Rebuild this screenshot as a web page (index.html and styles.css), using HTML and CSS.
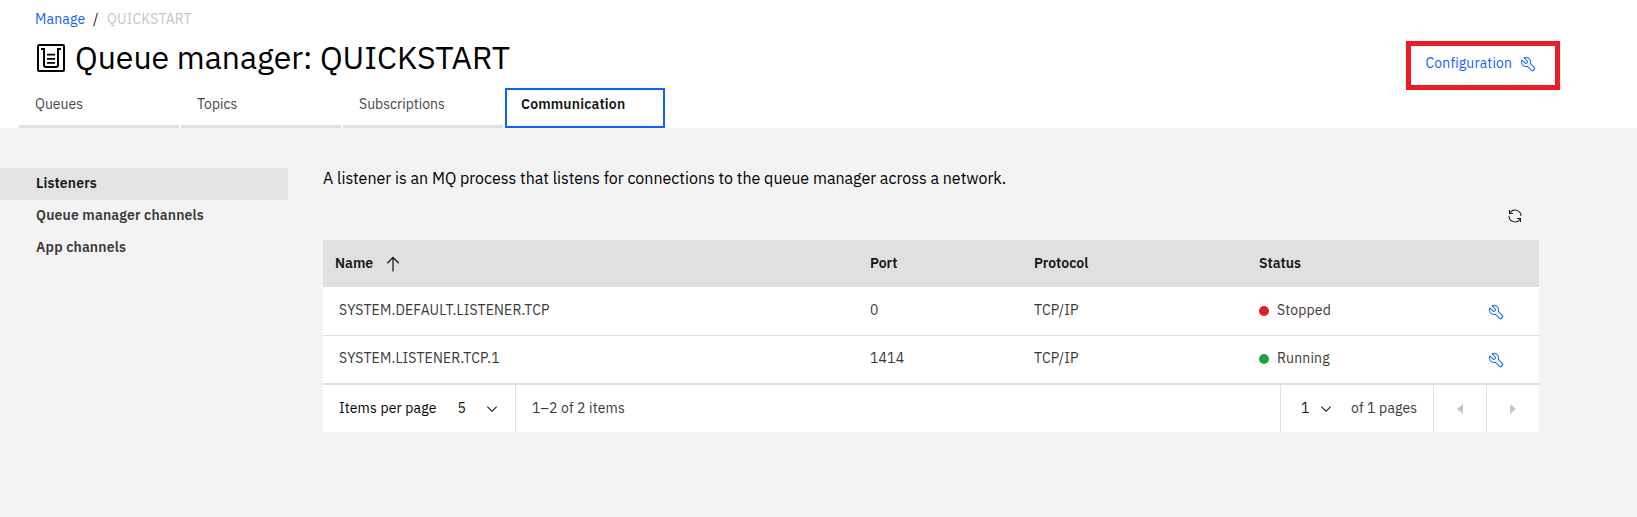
FILE: index.html
```html
<!DOCTYPE html>
<html lang="en">
<head>
<meta charset="utf-8">
<title>Queue manager: QUICKSTART</title>
<link rel="stylesheet" href="styles.css">
</head>
<body>
<svg class="defs" aria-hidden="true">
  <symbol id="wrench" viewBox="0 0 32 32"><path d="M12.1 2a9.8 9.8 0 0 0-5.4 1.6l6.4 6.4a2.1 2.1 0 0 1 .2 3 2.1 2.1 0 0 1-3-.2L3.7 6.4A9.84 9.84 0 0 0 2 12.1a10.14 10.14 0 0 0 10.1 10.1 10.9 10.9 0 0 0 2.6-.3l6.7 6.7a5 5 0 0 0 7.1-7.1l-6.7-6.7a10.9 10.9 0 0 0 .3-2.6A10 10 0 0 0 12.1 2zm8 10.1a7.61 7.61 0 0 1-.3 2.1l-.3 1.1.8.8 6.7 6.7a2.88 2.88 0 0 1 .9 2.1A2.72 2.72 0 0 1 27 27a2.9 2.9 0 0 1-4.2 0l-6.7-6.7-.8-.8-1.1.3a7.61 7.61 0 0 1-2.1.3 8.27 8.27 0 0 1-5.7-2.3A7.63 7.63 0 0 1 4 12.1a8.33 8.33 0 0 1 .3-2.2l4.4 4.4a4.14 4.14 0 0 0 5.9.2 4.14 4.14 0 0 0-.2-5.9L10 4.2a6.45 6.45 0 0 1 2-.3 8.27 8.27 0 0 1 5.7 2.3 8.49 8.49 0 0 1 2.4 5.9z"/></symbol>
  <symbol id="chevron" viewBox="0 0 16 16"><path d="M8 11 3 6l.7-.7L8 9.6l4.3-4.3.7.7z"/></symbol>
</svg>
<header class="header">
  <nav class="breadcrumb"><a class="crumb-link">Manage</a><span class="crumb-sep">/</span><span class="crumb-current">QUICKSTART</span></nav>
  <div class="title-row">
    <svg class="title-icon" viewBox="0 0 28 28"><rect x="1" y="1" width="26" height="26" rx="1.2"/><path d="M4 5h3v16q0 2 2 2h10q2 0 2-2V5h3"/><path class="thin" d="M10 10.7h8M10 14.8h8M10 18.9h8"/></svg>
    <h1 class="title">Queue manager: QUICKSTART</h1>
    <a class="config"><span class="config-label">Configuration</span><svg class="icon16"><use href="#wrench"/></svg></a>
  </div>
  <nav class="tabs">
    <a class="tab">Queues</a><a class="tab">Topics</a><a class="tab">Subscriptions</a><a class="tab tab-active">Communication</a>
  </nav>
</header>
<main class="main">
  <nav class="side">
    <a class="side-item side-active">Listeners</a>
    <a class="side-item">Queue manager channels</a>
    <a class="side-item">App channels</a>
  </nav>
  <section class="content">
    <p class="desc">A listener is an MQ process that listens for connections to the queue manager across a network.</p>
    <div class="toolbar"><svg class="icon16" viewBox="0 0 32 32"><path d="M12 10H6.78A11 11 0 0 1 27 16h2A13 13 0 0 0 6 7.68V4H4v8h8zM20 22h5.22A11 11 0 0 1 5 16H3a13 13 0 0 0 23 8.32V28h2v-8h-8z"/></svg></div>
    <div class="row head">
      <div class="h-name"><span>Name</span><svg class="icon20" viewBox="0 0 32 32"><path d="M16 4 6 14l1.41 1.41L15 7.83V28h2V7.83l7.59 7.58L26 14z"/></svg></div>
      <div>Port</div><div>Protocol</div><div>Status</div>
    </div>
    <div class="row">
      <div class="name">SYSTEM.DEFAULT.LISTENER.TCP</div><div>0</div><div>TCP/IP</div>
      <div class="status"><i class="dot red"></i><span>Stopped</span></div><svg class="icon16 blue"><use href="#wrench"/></svg>
    </div>
    <div class="row row-last">
      <div class="name">SYSTEM.LISTENER.TCP.1</div><div>1414</div><div>TCP/IP</div>
      <div class="status"><i class="dot green"></i><span>Running</span></div><svg class="icon16 blue"><use href="#wrench"/></svg>
    </div>
    <div class="pagination">
      <div class="per-page"><span class="ipp">Items per page</span><span class="size">5</span><svg class="icon16"><use href="#chevron"/></svg></div>
      <div class="range">1–2 of 2 items</div>
      <div class="page"><span class="page-num">1</span><svg class="icon16"><use href="#chevron"/></svg><span class="of">of 1 pages</span></div>
      <div class="pager"><svg class="caret" viewBox="0 0 6 10"><path d="M6 0v10L0 5z"/></svg></div>
      <div class="pager pager-next"><svg class="caret" viewBox="0 0 6 10"><path d="M0 0v10l6-5z"/></svg></div>
    </div>
  </section>
</main>
</body>
</html>
```
FILE: styles.css
```css
* { box-sizing: border-box; }
body { margin: 0; background: #f3f3f3; color: #161616; font: 14px/18px "IBM Plex Sans", Roboto, sans-serif; letter-spacing: .16px; white-space: nowrap; }
.defs { position: absolute; width: 0; height: 0; }
svg { flex: none; fill: currentColor; }
.icon16 { width: 16px; height: 16px; }
.icon20 { width: 20px; height: 20px; }
.header { height: 128px; background: #fff; display: flex; flex-direction: column; }
.breadcrumb { display: flex; padding: 10px 0 0 35px; height: 41px; }
.crumb-link { color: #0f62fe; width: 58px; }
.crumb-sep { width: 14px; }
.crumb-current { color: #c6c6c6; }
.title-row { display: flex; height: 47px; padding-left: 37px; }
.title-icon { width: 28px; height: 28px; margin-top: 3px; fill: none; stroke: #000; stroke-width: 2; }
.thin { stroke-width: 1.7; }
.title { margin: 0 0 0 10px; width: 1331px; font-size: 32px; font-weight: 400; line-height: 32px; letter-spacing: 0; color: #000; }
.config { width: 154px; height: 49px; border: 5px solid #ed1c24; color: #0f62fe; display: flex; padding: 8px 0 0 14.5px; }
.config-label { width: 94.5px; }
.config .icon16 { margin-top: 2px; }
.tabs { display: flex; gap: 2px; padding-left: 19px; height: 40px; }
.tab { width: 160px; height: 40px; padding: 7px 0 0 16px; border-bottom: 3px solid #e0e0e0; letter-spacing: 0; color: #464646; }
.tab-active { border: 2px solid #0f62fe; padding: 5px 0 0 14px; color: #161616; font-weight: 600; letter-spacing: .16px; }
.main { display: flex; padding-top: 40px; }
.side { width: 288px; margin-right: 35px; font-weight: 600; color: #393939; }
.side-item { display: block; height: 32px; padding: 6px 0 0 36px; }
.side-active { background: #e3e3e3; color: #161616; }
.content { width: 1216px; }
.desc { margin: 0; font-size: 16px; line-height: 21px; height: 40px; letter-spacing: 0; color: #000; }
.toolbar { height: 32px; display: flex; justify-content: flex-end; padding-right: 16px; }
.row { display: grid; grid-template-columns: 547px 164px 225px 229px 16px; height: 49px; padding-top: 14px; background: #fff; border-bottom: 1px solid #e0e0e0; color: #393939; }
.row .blue { margin-top: 3px; color: #0f62fe; }
.row.head { height: 47px; background: #e0e0e0; border: 0; color: #161616; font-weight: 600; letter-spacing: 0; }
.row.row-last { border-bottom-width: 2px; padding-top: 13px; }
.h-name { padding-left: 12px; display: flex; }
.h-name span { width: 48px; }
.name { padding-left: 16px; }
.status { display: flex; gap: 8px; }
.dot { width: 10px; height: 10px; border-radius: 50%; margin-top: 5px; }
.red { background: #da1e28; }
.green { background: #24a148; }
.pagination { display: flex; height: 47px; background: #fff; }
.per-page { width: 193px; border-right: 1px solid #e0e0e0; padding: 14px 0 0 16px; display: flex; }
.ipp { width: 118.5px; color: #000; }
.size { width: 26.5px; }
.range { width: 764px; padding: 14px 0 0 16px; color: #393939; }
.page { width: 154px; border: solid #e0e0e0; border-width: 0 1px; padding: 14px 0 0 20px; display: flex; }
.page-num { width: 17px; }
.of { margin-left: 17px; color: #393939; }
.per-page .icon16, .page .icon16 { margin-top: 2px; }
.pager { width: 52px; display: flex; align-items: center; justify-content: center; color: #c6c6c6; padding-right: 1px; }
.pager-next { width: 53px; border-left: 1px solid #e0e0e0; padding: 0; }
.caret { width: 6px; height: 10px; }
```
